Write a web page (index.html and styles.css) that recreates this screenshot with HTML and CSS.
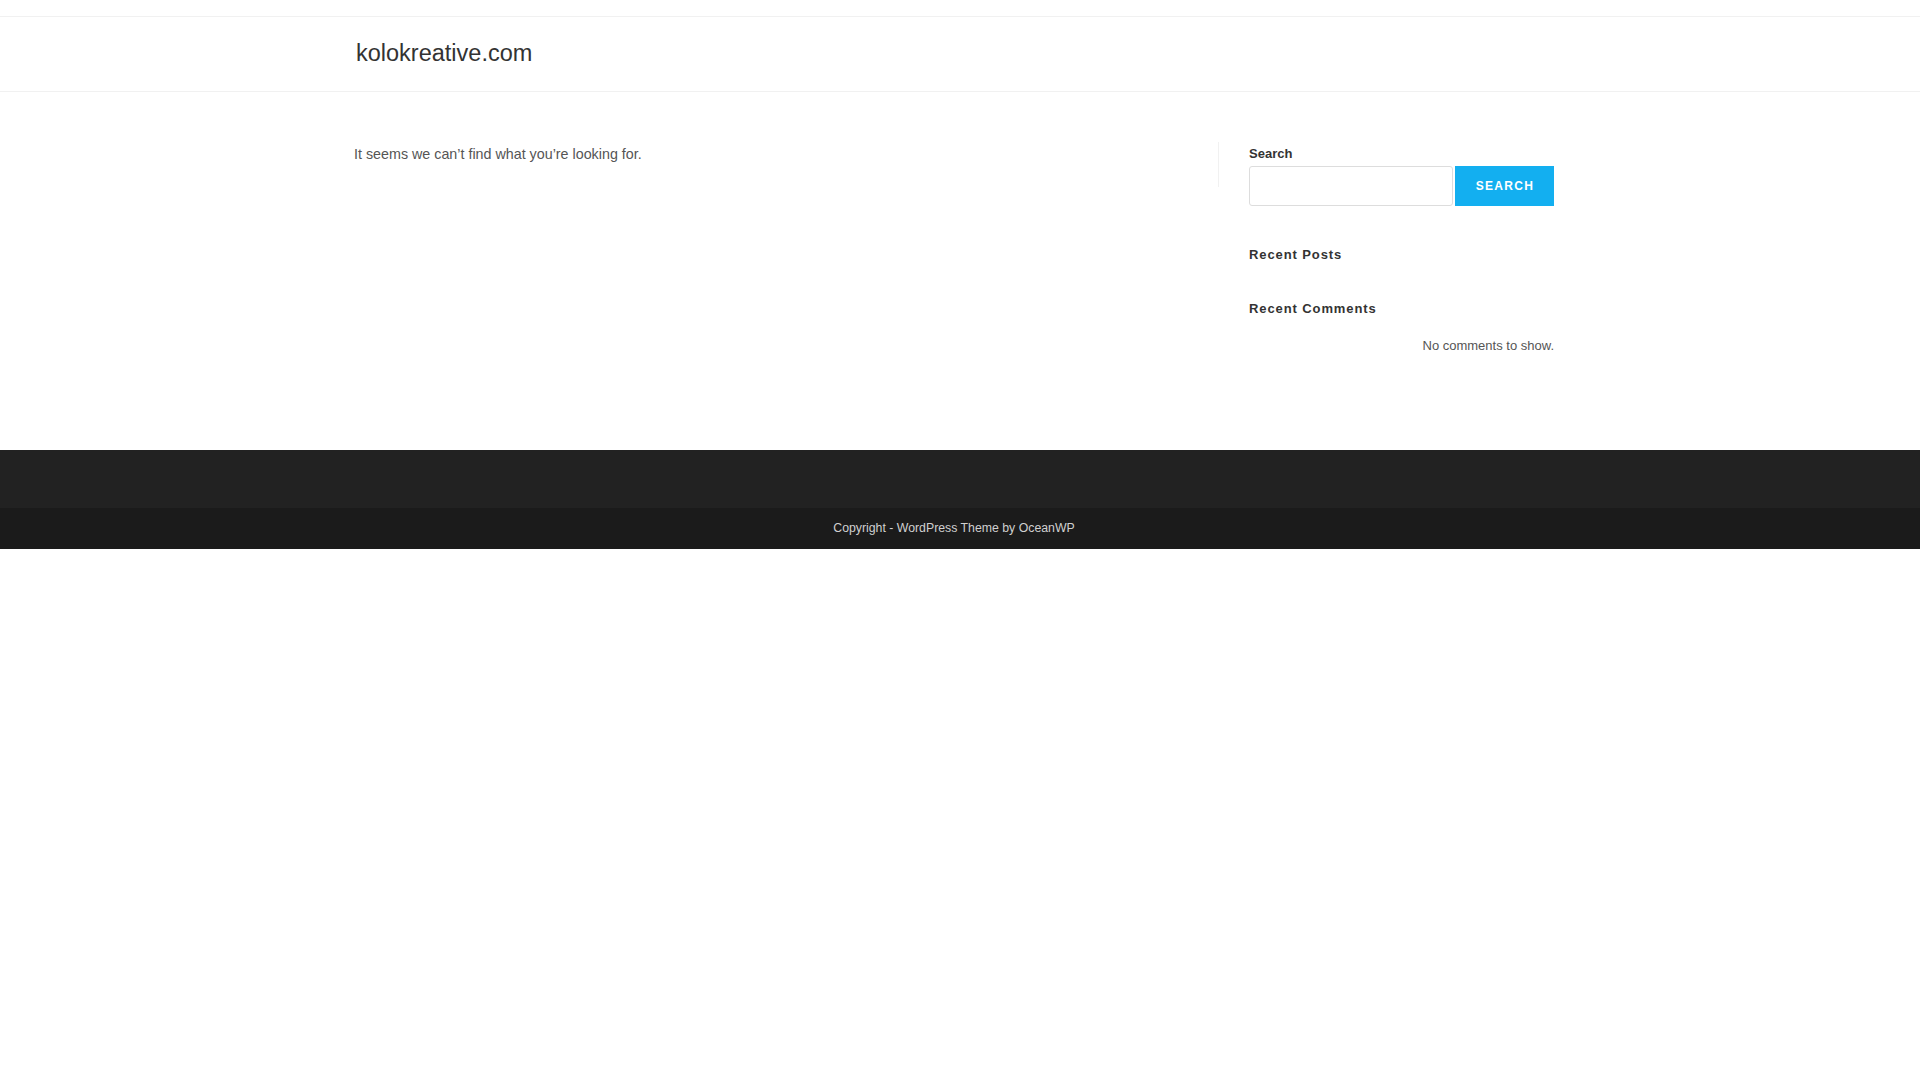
FILE: index.html
```html
<!DOCTYPE html>
<html lang="en">
<head>
<meta charset="utf-8">
<title>kolokreative.com</title>
<link rel="stylesheet" href="styles.css">
</head>
<body>
<div class="topbar"></div>
<header class="site-header">
  <div class="container header-inner">
    <a class="logo" href="#">kolokreative.com</a>
  </div>
</header>
<main class="main">
  <div class="container main-row">
    <div class="content-area">
      <p class="notfound">It seems we can’t find what you’re looking for.</p>
    </div>
    <aside class="sidebar">
      <div class="sidebar-rule"></div>
      <div class="sidebar-inner">
        <div class="search-label">Search</div>
        <form class="search-form">
          <input class="search-input" type="text" aria-label="Search">
          <button class="search-btn" type="button">SEARCH</button>
        </form>
        <h4 class="widget-title posts-title">Recent Posts</h4>
        <h4 class="widget-title comments-title">Recent Comments</h4>
        <p class="no-comments">No comments to show.</p>
      </div>
    </aside>
  </div>
</main>
<footer class="footer">
  <div class="footer-widgets"></div>
  <div class="footer-bottom">
    <div class="container footer-text">Copyright - WordPress Theme by OceanWP</div>
  </div>
</footer>
</body>
</html>
```

FILE: styles.css
```css
html, body {
  margin: 0;
  padding: 0;
  background: #fff;
  font-family: "Liberation Sans", Arial, sans-serif;
  color: #555;
}

.container {
  width: 1200px;
  margin-left: calc(50% - 606px);
  box-sizing: border-box;
}

.topbar {
  height: 16px;
  border-bottom: 1px solid #f1f1f1;
}

.site-header {
  height: 74px;
  border-bottom: 1px solid #f1f1f1;
}

.header-inner {
  height: 74px;
  display: flex;
  align-items: center;
}

.logo {
  font-size: 23.5px;
  color: #333;
  text-decoration: none;
  line-height: 1;
  padding-left: 2px;
}

.main {
  padding-top: 50px;
  padding-bottom: 93px;
}

.main-row {
  display: flex;
  align-items: flex-start;
}

.content-area {
  width: 864px;
  padding-right: 30px;
  box-sizing: border-box;
}

.notfound {
  margin: 0;
  font-size: 14.3px;
  line-height: 25px;
  color: #555;
}

.sidebar {
  width: 336px;
  display: flex;
  align-items: flex-start;
}

.sidebar-rule {
  width: 1px;
  height: 45px;
  background: #f1f1f1;
  flex: none;
}

.sidebar-inner {
  width: 305px;
  margin-left: 30px;
}

.search-label {
  font-size: 13px;
  font-weight: bold;
  color: #333;
  line-height: 23px;
  margin-bottom: 1px;
}

.search-form {
  display: flex;
  gap: 2px;
  margin: 0;
}

.search-input {
  width: 204px;
  height: 40px;
  box-sizing: border-box;
  border: 1px solid #ddd;
  border-radius: 3px;
  background: #fff;
  margin: 0;
  padding: 6px 12px;
  font-family: inherit;
}

.search-btn {
  width: 99px;
  height: 40px;
  border: 0;
  margin: 0;
  padding: 0 0 0 1px;
  background: #13aff0;
  color: #fff;
  font-family: "Liberation Sans", Arial, sans-serif;
  font-size: 12px;
  font-weight: bold;
  letter-spacing: 1.3px;
}

.widget-title {
  margin: 0;
  font-size: 13px;
  font-weight: bold;
  color: #333;
  line-height: 18px;
  letter-spacing: 0.9px;
}

.posts-title {
  margin-top: 40px;
}

.comments-title {
  margin-top: 36px;
}

.no-comments {
  margin: 16px 0 0;
  font-size: 13px;
  line-height: 23px;
  color: #555;
  text-align: right;
}

.footer-widgets {
  height: 58px;
  background: #222;
}

.footer-bottom {
  background: #1b1b1b;
}

.footer-text {
  height: 41px;
  line-height: 41px;
  text-align: center;
  font-size: 12.3px;
  color: #d0d0d0;
}
```
